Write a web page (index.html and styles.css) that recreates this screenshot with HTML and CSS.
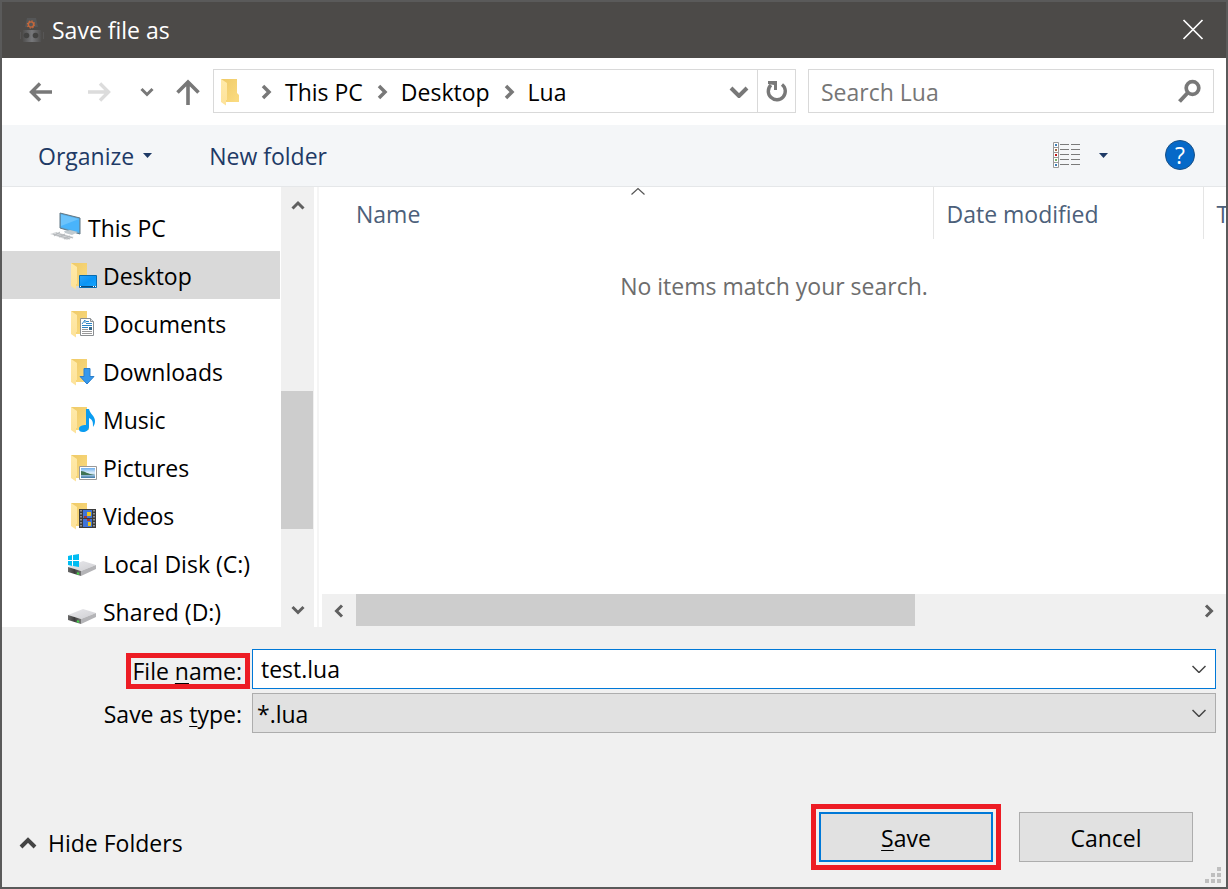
FILE: index.html
```html
<!DOCTYPE html>
<html lang="en">
<head>
<meta charset="utf-8">
<title>Save file as</title>
<link rel="stylesheet" href="styles.css">
</head>
<body>
<svg class="defs" aria-hidden="true">
  <defs>
    <linearGradient id="fold-back" x1="0" y1="0" x2="1" y2="1"><stop offset="0" stop-color="#efca67"/><stop offset="1" stop-color="#fbdc82"/></linearGradient>
    <linearGradient id="fold-front" x1="0" y1="0" x2="0" y2="1"><stop offset="0" stop-color="#ffeaa9"/><stop offset="1" stop-color="#fde29a"/></linearGradient>
    <linearGradient id="screen" x1="0" y1="0" x2="1" y2="1"><stop offset="0" stop-color="#2ea3f7"/><stop offset=".5" stop-color="#0a94f5"/><stop offset="1" stop-color="#18a8ff"/></linearGradient>
    <linearGradient id="disk-top" x1="0" y1="0" x2="1" y2="1"><stop offset="0" stop-color="#e9e9ec"/><stop offset="1" stop-color="#cfcfd3"/></linearGradient>
    <linearGradient id="disk-side" x1="0" y1="0" x2="1" y2="0"><stop offset="0" stop-color="#6a6a6a"/><stop offset=".5" stop-color="#3d3d3d"/><stop offset="1" stop-color="#777"/></linearGradient>
    <linearGradient id="robot" x1="0" y1="0" x2="1" y2="0"><stop offset="0" stop-color="#4b4a49"/><stop offset=".5" stop-color="#77787b"/><stop offset="1" stop-color="#4b4a49"/></linearGradient>
    <linearGradient id="photo" x1="0" y1="0" x2="0" y2="1"><stop offset="0" stop-color="#6fb0ee"/><stop offset=".5" stop-color="#e2f0fb"/><stop offset="1" stop-color="#3c78a8"/></linearGradient>
    <symbol id="folder" viewBox="0 0 30 30">
      <path d="M4 3h16v14l2 2v7H8z" fill="url(#fold-back)"/>
      <path d="M4 3l6 4v17H9v5.500L4 26z" fill="url(#fold-front)"/>
    </symbol>
    <symbol id="drive" viewBox="0 0 30 30">
      <path d="M1 19l15-6 13 4-15 6z" fill="url(#disk-top)"/>
      <path d="M1 19l13 4v5L1 24z" fill="url(#disk-side)"/>
      <path d="M14 23l15-6v4l-15 7z" fill="#b4b4b7"/>
      <path d="M10 25l2 1" stroke="#45d04a" stroke-width="2"/>
    </symbol>
  </defs>
</svg>

<main class="dialog">
  <header class="titlebar">
    <svg class="app-icon" width="24" height="26" viewBox="0 0 24 26" aria-hidden="true">
      <path d="M7 1h9l2 9H5z" fill="#555657"/>
      <path d="M3 13h18l1 6-1 6H3l-1-6z" fill="url(#robot)"/>
      <path d="M0 15v7M24 15v7" stroke="#575656" stroke-width="2"/>
      <circle cx="6.500" cy="18.500" r="2.800" fill="#424241"/><circle cx="15.500" cy="18.500" r="2.800" fill="#424241"/>
      <circle cx="11" cy="7.500" r="2.600" fill="none" stroke="#c8683a" stroke-width="1.300"/>
      <circle cx="11" cy="7.500" r="3.600" fill="none" stroke="#c8683a" stroke-width="1.200" stroke-dasharray="1.300 1.530"/>
    </svg>
    <h1 class="title">Save file as</h1>
    <button class="close" type="button" aria-label="Close">
      <svg width="22" height="22" viewBox="0 0 22 22"><path d="M1.500 1l19 19M20.500 1l-19 19" stroke="#fff" stroke-width="1.700"/></svg>
    </button>
  </header>

  <nav class="nav">
    <button class="nav-btn" type="button" aria-label="Back">
      <svg width="26" height="26" viewBox="0 0 26 26"><path d="M24 14H4M12 5.500L3.500 14l8.500 8.500" fill="none" stroke="#787878" stroke-width="3.400"/></svg>
    </button>
    <button class="nav-btn" type="button" aria-label="Forward" disabled>
      <svg width="26" height="26" viewBox="0 0 26 26"><path d="M2 14h20M14 5.500l8.500 8.500-8.500 8.500" fill="none" stroke="#dcdcdc" stroke-width="3.400"/></svg>
    </button>
    <button class="nav-btn recent" type="button" aria-label="Recent locations">
      <svg width="14" height="14" viewBox="0 0 14 14"><path d="M1.500 5L7 10.500 12.500 5" fill="none" stroke="#787878" stroke-width="3"/></svg>
    </button>
    <button class="nav-btn up" type="button" aria-label="Up">
      <svg width="26" height="28" viewBox="0 0 26 28"><path d="M13 28V6M2.500 15.500L13 5l10.500 10.500" fill="none" stroke="#787878" stroke-width="3.600"/></svg>
    </button>
    <div class="address">
      <svg class="address-folder" width="30" height="30" aria-hidden="true"><use href="#folder"/></svg>
      <ol class="crumbs">
        <li><svg width="12" height="16" viewBox="0 0 12 16"><path d="M2 2l6 6-6 6" /></svg><a href="#pc">This PC</a></li>
        <li><svg width="12" height="16" viewBox="0 0 12 16"><path d="M2 2l6 6-6 6" /></svg><a href="#desktop">Desktop</a></li>
        <li><svg width="12" height="16" viewBox="0 0 12 16"><path d="M2 2l6 6-6 6" /></svg><a href="#lua">Lua</a></li>
      </ol>
      <button class="address-btn" type="button" aria-label="Previous locations">
        <svg width="20" height="14" viewBox="0 0 20 14"><path d="M2 4l8 8 8-8" fill="none" stroke="#787878" stroke-width="4"/></svg>
      </button>
      <button class="address-btn refresh" type="button" aria-label="Refresh">
        <svg width="24" height="26" viewBox="0 0 24 26"><path d="M17 6.500A8.500 8.500 0 1 1 6 7" fill="none" stroke="#787878" stroke-width="3.400"/><path d="M3 3h9v9H9V7L3 6z" fill="#787878"/></svg>
      </button>
    </div>
    <div class="search">
      <input class="search-input" type="search" placeholder="Search Lua" aria-label="Search Lua">
      <svg width="26" height="26" viewBox="0 0 26 26" aria-hidden="true"><circle cx="16.500" cy="10" r="6.300" fill="none" stroke="#787878" stroke-width="3.700"/><path d="M12 14.500L3.500 23.500" stroke="#787878" stroke-width="4"/></svg>
    </div>
  </nav>

  <div class="toolbar">
    <button class="tool" type="button">Organize <svg width="9" height="5" viewBox="0 0 9 5"><path d="M0 0h9L4.500 5z" fill="#1e3a66"/></svg></button>
    <button class="tool" type="button">New folder</button>
    <button class="tool view" type="button" aria-label="Change your view">
      <svg width="28" height="26" viewBox="0 0 28 26">
        <path d="M.5.500h5v25h-5zM.5 5.500h5M.5 10.500h5M.5 15.500h5M.5 20.500h5" fill="#fff" stroke="#999"/>
        <path d="M2 2h2v2H2zM2 22h2v2H2z" fill="#3f7fb5"/><path d="M2 7h2v2H2z" fill="#a06a4a"/><path d="M2 12h2v2H2z" fill="#c01818"/><path d="M2 17h2v2H2z" fill="#76b46a"/>
        <path d="M7 2.500h9M18 2.500h9M7 7.500h9M18 7.500h9M7 12.500h9M18 12.500h9M7 17.500h9M18 17.500h9M7 22.500h9M18 22.500h9" stroke="#7a7a7a"/>
      </svg>
      <svg width="9" height="5" viewBox="0 0 9 5"><path d="M0 0h9L4.500 5z" fill="#1e3a66"/></svg>
    </button>
    <button class="help" type="button" aria-label="Help">?</button>
  </div>

  <section class="browser">
    <ul class="tree">
      <li class="tree-item root">
        <svg width="34" height="30" viewBox="0 0 34 30" aria-hidden="true">
          <path d="M12 1l20 5v16L12 16z" fill="#58a9dc" stroke="#607684"/>
          <path d="M13 2.500l18 4.500v13L13 15z" fill="#49b4fb"/><path d="M13 2.500l18 4.500L13 14z" fill="#6cc3fb"/>
          <path d="M16 19l6-1 8 2-6 3-7-2z" fill="#c2cbd0"/>
          <path d="M2 22l6-2 18 5-7 3z" fill="#d8dadc"/>
          <path d="M5 22l17 5M8 21l17 5M6 24l6-4M11 25l6-3M16 27l6-3" stroke="#b4b8bb"/>
        </svg>This PC</li>
      <li class="tree-item selected" aria-current="true">
        <svg width="30" height="30" viewBox="0 0 30 30" aria-hidden="true"><use href="#folder"/><path d="M12.500 15.500h17v12h-17z" fill="url(#screen)" stroke="#076bb0"/><path d="M13 26.500h16" stroke="#0d4a7a"/><path d="M13 26.500h1M26 26.500h1M28 26.500h1" stroke="#fff"/></svg>Desktop</li>
      <li class="tree-item">
        <svg width="30" height="30" viewBox="0 0 30 30" aria-hidden="true"><use href="#folder"/><path d="M13.500 10.500h10l3 3v14h-13z" fill="#fff" stroke="#8b8f92"/><path d="M23.500 10.500v3h3" fill="#ddd" stroke="#8b8f92"/><path d="M15 16l3-4v3" fill="none" stroke="#2f86c5"/><path d="M19 13.500h3M19 15.500h6M15 17.500h10M15 19.500h6" stroke="#2f86c5"/><path d="M15 21.500h6M15 23.500h10M15 25.500h10" stroke="#999"/><path d="M22 19h3v3h-3z" fill="#396b8d"/></svg>Documents</li>
      <li class="tree-item">
        <svg width="30" height="30" viewBox="0 0 30 30" aria-hidden="true"><use href="#folder"/><path d="M17 12.500h6v8h4L20 28l-7-7.500h4z" fill="#3698ec" stroke="#2a7fcd"/></svg>Downloads</li>
      <li class="tree-item">
        <svg width="30" height="30" viewBox="0 0 30 30" aria-hidden="true"><use href="#folder"/><path d="M19 5h3c1 5 6 7 6 12 0 3-1 4-2 6 0-5 0-7-4-9v9c0 3-3 5-6 5s-4-1-4-3c0-3 3-4 7-4z" fill="#0a9cf0"/></svg>Music</li>
      <li class="tree-item">
        <svg width="30" height="30" viewBox="0 0 30 30" aria-hidden="true"><use href="#folder"/><path d="M12.500 14.500h17v13h-17z" fill="#fff" stroke="#999"/><path d="M14 16h14v10H14z" fill="url(#photo)"/><path d="M14 19c4 0 6 3 14 4H14z" fill="#3f7355"/></svg>Pictures</li>
      <li class="tree-item">
        <svg width="30" height="30" viewBox="0 0 30 30" aria-hidden="true"><use href="#folder"/><path d="M12 9h17v19H12z" fill="#3b3b3b"/><path d="M16 10h9v8h-9zM16 19h9v8h-9z" fill="#3f74d8"/><path d="M14 10v18M27 10v18" stroke="#e8e8e8" stroke-dasharray="1.500 1.500"/><path d="M20 12h4v4h-4zM21 22h3v4h-3z" fill="#edc51b"/><path d="M17 16h3v2h-3zM20 19h3v2h-3z" fill="#a5372e"/></svg>Videos</li>
      <li class="tree-item">
        <svg width="30" height="30" viewBox="0 0 30 30" aria-hidden="true"><use href="#drive"/><path d="M1 8l4-1v5H1zM6 7l6-1v6H6zM1 13h4v5l-4-1zM6 13h6v6l-6-1z" fill="#00bcf2"/></svg>Local Disk (C:)</li>
      <li class="tree-item">
        <svg width="30" height="30" viewBox="0 0 30 30" aria-hidden="true"><use href="#drive"/></svg>Shared (D:)</li>
    </ul>
    <div class="vscroll">
      <button class="scroll-btn" type="button" aria-label="Scroll up"><svg width="14" height="10" viewBox="0 0 14 10"><path d="M1.500 8.500L7 3l5.500 5.500"/></svg></button>
      <span class="thumb"></span>
      <button class="scroll-btn" type="button" aria-label="Scroll down"><svg width="14" height="10" viewBox="0 0 14 10"><path d="M1.500 2L7 7.500 12.500 2"/></svg></button>
    </div>
    <div class="splitter"></div>
    <div class="files">
      <div class="files-view">
        <table class="columns">
          <thead>
            <tr>
              <th class="col-name" scope="col" aria-sort="ascending">Name<svg class="sort" width="16" height="8" viewBox="0 0 16 8"><path d="M1.500 7.500L8 1.500l6.500 6" fill="none" stroke="#555" stroke-width="1.200"/></svg></th>
              <th class="col-date" scope="col">Date modified</th>
              <th class="col-type" scope="col">Type</th>
            </tr>
          </thead>
        </table>
        <p class="empty">No items match your search.</p>
      </div>
      <div class="hscroll">
        <button class="scroll-btn" type="button" aria-label="Scroll left"><svg width="10" height="14" viewBox="0 0 10 14"><path d="M8 1.500L2.500 7 8 12.500"/></svg></button>
        <span class="thumb"></span>
        <button class="scroll-btn" type="button" aria-label="Scroll right"><svg width="10" height="14" viewBox="0 0 10 14"><path d="M2 1.500L7.500 7 2 12.500"/></svg></button>
      </div>
    </div>
  </section>

  <form class="footer">
    <div class="fields">
      <label class="label marked" for="file-name">File <u>n</u>ame:</label>
      <div class="combo">
        <input class="combo-input" id="file-name" type="text" value="test.lua">
        <button class="combo-btn" type="button" aria-label="Show file names"><svg width="14" height="8" viewBox="0 0 14 8"><path d="M.5 1L7 7.500 13.500 1"/></svg></button>
      </div>
      <label class="label" for="file-type">Save as <u>t</u>ype:</label>
      <div class="combo type">
        <select class="combo-input" id="file-type"><option>*.lua</option></select>
        <svg class="select-arrow" width="14" height="8" viewBox="0 0 14 8" aria-hidden="true"><path d="M.5 1L7 7.500 13.500 1"/></svg>
      </div>
    </div>
    <div class="actions">
      <button class="hide" type="button"><svg width="18" height="14" viewBox="0 0 18 14"><path d="M2 11l7-7 7 7" fill="none" stroke="#444" stroke-width="4"/></svg>Hide Folders</button>
      <button class="btn primary" type="submit"><span><u>S</u>ave</span></button>
      <button class="btn" type="button">Cancel</button>
    </div>
    <svg class="grip" width="16" height="16" viewBox="0 0 16 16" aria-hidden="true"><path d="M12 0h4v4h-4zM6 6h4v4H6zM12 6h4v4h-4zM0 12h4v4H0zM6 12h4v4H6zM12 12h4v4h-4z" fill="#bfbfbf"/></svg>
  </form>
</main>
</body>
</html>
```

FILE: styles.css
```css
* { box-sizing: border-box; }

body {
  margin: 0;
  font: 23px/32px "Open Sans", "Noto Sans", sans-serif;
  color: #000;
}

button, input, select {
  margin: 0;
  padding: 0;
  border: 0;
  border-radius: 0;
  background: none;
  font: inherit;
  color: inherit;
  outline: 0;
  appearance: none;
}

svg { flex: none; }

u {
  text-decoration-thickness: 1px;
  text-underline-offset: 3px;
}

.defs { position: absolute; width: 0; height: 0; }

.dialog {
  display: flex;
  flex-direction: column;
  min-height: 100vh;
  border: 2px solid #5a5a5a;
  background: #fff;
}

.titlebar {
  display: flex;
  align-items: center;
  gap: 8px;
  height: 56px;
  padding: 0 22px 0 18px;
  background: #4c4a48;
  color: #fff;
}
.title { flex: 1; margin: 0; font-size: inherit; font-weight: 400; }
.close { display: flex; }

.nav {
  display: flex;
  align-items: center;
  padding: 11px 12px 12px 10px;
}
.nav-btn { display: flex; justify-content: center; width: 58px; }
.nav-btn.recent { width: 38px; }
.nav-btn.up { width: 44px; margin-right: 3px; }

.address {
  display: flex;
  align-items: center;
  flex: 583 1 583px;
  height: 44px;
  margin-right: 12px;
  border: 1px solid #d9d9d9;
}
.address-folder { margin-left: 3px; }
.crumbs {
  display: flex;
  flex: 1;
  gap: 14px;
  margin: 0;
  padding: 1px 0 0 14px;
  list-style: none;
}
.crumbs li { display: flex; align-items: center; gap: 12px; }
.crumbs path { fill: none; stroke: #787878; stroke-width: 3.5; }
.crumbs a { color: inherit; text-decoration: none; }
.address-btn {
  display: flex;
  align-items: center;
  justify-content: center;
  align-self: stretch;
  width: 36px;
}
.address-btn.refresh { width: 38px; border-left: 1px solid #d9d9d9; }

.search {
  display: flex;
  align-items: center;
  flex: 406 1 406px;
  height: 44px;
  padding: 0 11px 0 12px;
  border: 1px solid #d9d9d9;
}
.search-input { flex: 1; min-width: 0; padding-top: 2px; }
.search-input::placeholder { color: #767676; opacity: 1; }

.toolbar {
  display: flex;
  align-items: center;
  height: 62px;
  padding: 0 31px 1px 36px;
  gap: 57px;
  border-bottom: 1px solid #e5e7e9;
  background: #f4f6f8;
  color: #1e3a66;
}
.tool { display: flex; align-items: center; gap: 9px; padding-top: 1px; }
.tool.view { gap: 18px; margin-left: auto; padding-top: 0; }
.help {
  width: 30px;
  height: 30px;
  border: 1px solid #1a5186;
  border-radius: 50%;
  background: #0669c8;
  color: #fff;
  line-height: 28px;
}

.browser { display: flex; height: 440px; }
.tree {
  width: 279px;
  margin: 0;
  padding: 16px 1px 0 0;
  list-style: none;
  overflow: hidden;
}
.tree-item {
  display: flex;
  align-items: center;
  gap: 6px;
  height: 48px;
  padding: 2px 0 0 65px;
  white-space: nowrap;
}
.tree-item svg { margin-bottom: 2px; }
.tree-item.root { padding-left: 46px; }
.tree-item.selected { background: #d9d9d9; }

.vscroll {
  display: grid;
  grid-template-rows: 36px 168fr 138fr 63fr 35px;
  width: 33px;
  background: #f0f0f0;
}
.vscroll .thumb { grid-row: 3; margin-right: 1px; }
.vscroll .scroll-btn:last-child { grid-row: 5; }
.thumb { background: #cdcdcd; }
.scroll-btn { display: flex; align-items: center; justify-content: center; }
.scroll-btn path { fill: none; stroke: #606060; stroke-width: 3; }
.splitter { width: 8px; border: solid #fff; border-width: 0 3px; background: #f5f5f5; }

.files { display: flex; flex-direction: column; flex: 1; min-width: 0; }
.files-view { flex: 1; overflow: hidden; }
.columns {
  width: 1100px;
  margin-left: 21px;
  border-collapse: collapse;
  table-layout: fixed;
  color: #4c607a;
}
.columns th {
  height: 52px;
  padding: 1px 13px 0;
  border-right: 1px solid #e5e5e5;
  font-weight: 400;
  text-align: left;
}
.columns .col-name { position: relative; width: 590px; }
.columns .col-date { width: 270px; }
.sort { position: absolute; top: 0; left: 50%; margin-left: -8px; }
.empty { margin: 31px 0 0; color: #6d6d6d; text-align: center; }

.hscroll {
  display: grid;
  grid-template-columns: 34px 559fr 277fr 34px;
  height: 33px;
  background: #f0f0f0;
}
.hscroll .thumb { margin-bottom: 1px; }
.hscroll .scroll-btn:last-child { grid-column: 4; }

.footer {
  position: relative;
  display: flex;
  flex-direction: column;
  flex: 1;
  justify-content: space-between;
  padding: 22px 10px 25px 0;
  background: #f0f0f0;
}
.fields {
  display: grid;
  grid-template-columns: 248px 1fr;
  align-items: center;
  gap: 4px 2px;
}
.label { justify-self: end; padding: 2px 8px 0; }
.label.marked {
  height: 36px;
  margin-top: 4px;
  padding: 0 3px 0 1px;
  border: 5px solid #ed1c24;
  line-height: 26px;
}
.combo {
  display: flex;
  align-items: center;
  position: relative;
  height: 40px;
  border: 1px solid #0078d7;
  background: #fff;
}
.combo-input { flex: 1; min-width: 0; height: 38px; padding-left: 8px; }
.combo-btn { display: flex; align-items: center; height: 38px; padding: 0 9px; }
.combo-btn path, .select-arrow path { fill: none; stroke: #444; stroke-width: 1.5; }
.combo.type { border-color: #adadad; background: #e1e1e1; }
.combo.type .combo-input { padding: 2px 0 0 4px; }
.select-arrow { position: absolute; right: 9px; pointer-events: none; }

.actions { display: flex; align-items: center; gap: 26px; padding: 0 23px 0 17px; }
.hide { display: flex; align-items: center; gap: 11px; margin: 12px auto 0 0; }
.btn {
  width: 174px;
  height: 50px;
  padding-top: 2px;
  border: 1px solid #adadad;
  background: #e1e1e1;
}
.btn.primary {
  border: 2px solid #0078d7;
  outline: 5px solid #ed1c24;
  outline-offset: 3px;
}
.grip { position: absolute; right: 5px; bottom: 4px; }
```
